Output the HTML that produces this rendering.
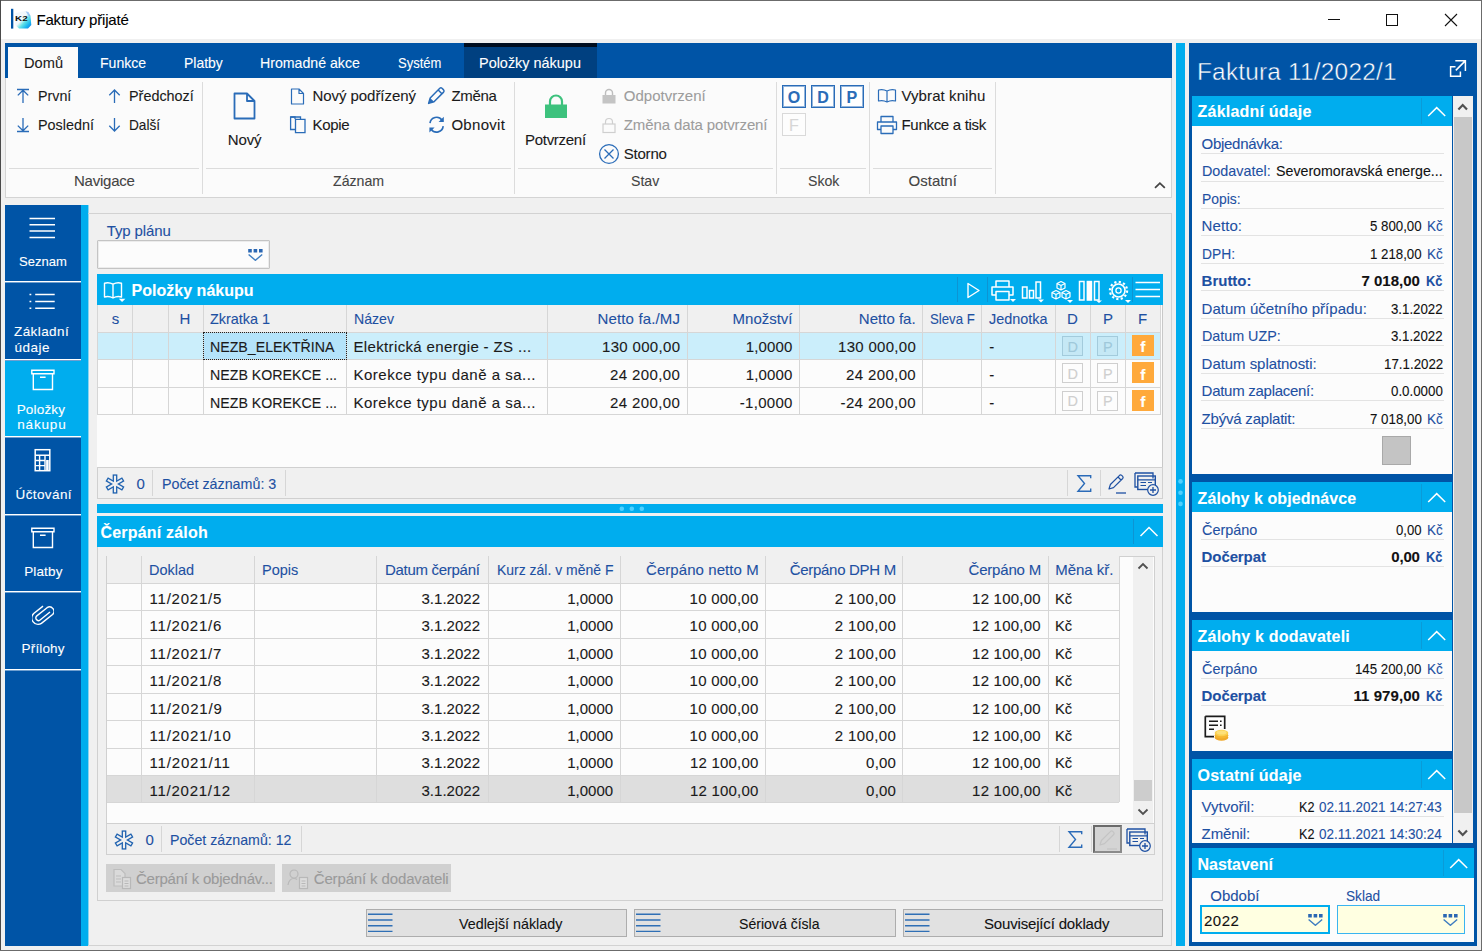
<!DOCTYPE html>
<html lang="cs"><head><meta charset="utf-8"><title>Faktury přijaté</title>
<style>
html,body{margin:0;padding:0;}
body{width:1482px;height:951px;overflow:hidden;background:#f0f0f0;font-family:"Liberation Sans",sans-serif;}
#w{position:relative;width:1482px;height:951px;overflow:hidden;}
#w div,#w span,#w svg{position:absolute;box-sizing:border-box;}
#w span{white-space:pre;-webkit-text-stroke:0.1px;}
</style></head><body><div id="w">
<div style="left:0px;top:0px;width:1482px;height:951px;background:#f0f0f0;"></div>
<div style="left:1px;top:1px;width:1480px;height:38px;background:#ffffff;"></div>
<div style="left:0px;top:0px;width:1482px;height:1px;background:#6b6b6b;"></div>
<div style="left:0px;top:0px;width:1px;height:951px;background:#4a4a4a;"></div>
<div style="left:1481px;top:0px;width:1px;height:951px;background:#6b6b6b;"></div>
<div style="left:0px;top:950px;width:1482px;height:1px;background:#6b6b6b;"></div>
<svg style="left:11px;top:8px;" width="22" height="22" viewBox="0 0 22 22"><defs><linearGradient id="k2g" x1="0" y1="0" x2="1" y2="1"><stop offset="0.45" stop-color="#f2f8fc"/><stop offset="0.62" stop-color="#5fe0e6"/><stop offset="0.8" stop-color="#18b4f0"/><stop offset="1" stop-color="#1b6fe0"/></linearGradient></defs>
<rect x="0" y="0.8" width="2.3" height="19.8" fill="#0054a6"/>
<path d="M4.5 5 L14 3 L19.5 8 L20.3 17 L17 20.6 L8 20.6 L4 17 Z" fill="url(#k2g)"/>
<path d="M14.5 3.2 L17.5 4 L19.6 8 L18 8.5 Z" fill="#7fb4f2" opacity="0.75"/>
<text x="4.1" y="12.9" font-size="7" font-weight="bold" font-family="Liberation Sans, sans-serif" fill="#111" textLength="12.6" lengthAdjust="spacingAndGlyphs">K2</text></svg>
<span style="top:11px;font-size:15px;line-height:17px;color:#000;letter-spacing:-0.200px;left:36.50px;">Faktury přijaté</span>
<div style="left:1328px;top:19px;width:12px;height:1px;background:#111;"></div>
<div style="left:1386px;top:14px;width:12px;height:12px;border:1px solid #111;"></div>
<svg style="left:1444px;top:13px;" width="14" height="14" viewBox="0 0 14 14"><path d="M1 1 L13 13 M13 1 L1 13" stroke="#111" stroke-width="1.1" fill="none"/></svg>
<div style="left:5px;top:43px;width:1167px;height:35px;background:#0054a6;"></div>
<div style="left:5px;top:78px;width:1167px;height:120px;background:#fbfbfb;border:1px solid #d4d4d4;border-top:none;"></div>
<div style="left:8px;top:47px;width:70px;height:31px;background:#fbfbfb;"></div>
<span style="top:54px;left:24.00px;font-size:15px;line-height:17px;color:#1a1a1a;transform:scaleX(0.9750);transform-origin:0 0;">Domů</span>
<span style="top:54px;left:99.60px;font-size:15px;line-height:17px;color:#fff;transform:scaleX(0.9381);transform-origin:0 0;">Funkce</span>
<span style="top:54px;left:184.00px;font-size:15px;line-height:17px;color:#fff;transform:scaleX(0.9293);transform-origin:0 0;">Platby</span>
<span style="top:54px;left:260.00px;font-size:15px;line-height:17px;color:#fff;transform:scaleX(0.9434);transform-origin:0 0;">Hromadné akce</span>
<span style="top:54px;left:397.50px;font-size:15px;line-height:17px;color:#fff;transform:scaleX(0.8660);transform-origin:0 0;">Systém</span>
<div style="left:464px;top:43px;width:133px;height:35px;background:#004080;"></div>
<div style="left:464px;top:43px;width:133px;height:4px;background:#000d1f;"></div>
<span style="top:54px;left:479.00px;font-size:15px;line-height:17px;color:#fff;transform:scaleX(0.9623);transform-origin:0 0;">Položky nákupu</span>
<svg style="left:16px;top:88px;" width="14" height="16" viewBox="0 0 14 16"><path d="M1 1.5 H13 M7 2.2 V15 M1.8 7.4 L7 2.2 L12.2 7.4" stroke="#2a6cb8" stroke-width="1.3" fill="none"/></svg>
<span style="top:87px;left:37.70px;font-size:15px;line-height:17px;color:#1a1a1a;transform:scaleX(0.9514);transform-origin:0 0;">První</span>
<svg style="left:16px;top:117px;" width="14" height="16" viewBox="0 0 14 16"><path d="M1 14.5 H13 M7 1 V13.8 M1.8 8.6 L7 13.8 L12.2 8.6" stroke="#2a6cb8" stroke-width="1.3" fill="none"/></svg>
<span style="top:116px;left:37.70px;font-size:15px;line-height:17px;color:#1a1a1a;transform:scaleX(0.9573);transform-origin:0 0;">Poslední</span>
<svg style="left:108px;top:88px;" width="13" height="16" viewBox="0 0 13 16"><path d="M6.5 2 V15 M1.3 7.2 L6.5 2 L11.7 7.2" stroke="#2a6cb8" stroke-width="1.3" fill="none"/></svg>
<span style="top:87px;left:129.00px;font-size:15px;line-height:17px;color:#1a1a1a;transform:scaleX(0.9594);transform-origin:0 0;">Předchozí</span>
<svg style="left:108px;top:117px;" width="13" height="16" viewBox="0 0 13 16"><path d="M6.5 1 V14 M1.3 8.8 L6.5 14 L11.7 8.8" stroke="#2a6cb8" stroke-width="1.3" fill="none"/></svg>
<span style="top:116px;left:129.00px;font-size:15px;line-height:17px;color:#1a1a1a;transform:scaleX(0.9109);transform-origin:0 0;">Další</span>
<div style="left:9px;top:168px;width:190px;height:1px;background:#dcdcdc;"></div>
<span style="top:172px;font-size:15px;line-height:17px;color:#444;letter-spacing:-0.243px;left:74.00px;">Navigace</span>
<div style="left:202px;top:82px;width:1px;height:112px;background:#dcdcdc;"></div>
<svg style="left:233px;top:92px;" width="23" height="28" viewBox="0 0 23 28"><path d="M1.5 1.5 H14 L21.5 9 V26.5 H1.5 Z M14 1.5 V9 H21.5" stroke="#2a6cb8" stroke-width="1.8" fill="none" stroke-linejoin="round"/></svg>
<span style="top:131px;font-size:15px;line-height:17px;color:#1a1a1a;letter-spacing:-0.083px;left:227.70px;">Nový</span>
<svg style="left:290px;top:88px;" width="15" height="17" viewBox="0 0 15 17"><path d="M1.5 1 H9 L13.5 5.5 V16 H1.5 Z M9 1 V5.5 H13.5" stroke="#2a6cb8" stroke-width="1.2" fill="none" stroke-linejoin="round"/></svg>
<span style="top:87px;font-size:15px;line-height:17px;color:#1a1a1a;letter-spacing:-0.058px;left:312.50px;">Nový podřízený</span>
<svg style="left:289px;top:115px;" width="18" height="19" viewBox="0 0 18 19"><path d="M6 4 V2 H1.6 V14.5 H6 M6.5 4.4 H16 V17.6 H6.5 Z" stroke="#2a6cb8" stroke-width="1.3" fill="none" stroke-linejoin="miter"/><path d="M1.6 2 H11.5 V4" stroke="#2a6cb8" stroke-width="1.3" fill="none"/></svg>
<span style="top:116px;font-size:15px;line-height:17px;color:#1a1a1a;letter-spacing:-0.287px;left:312.50px;">Kopie</span>
<svg style="left:427px;top:86px;" width="19" height="19" viewBox="0 0 19 19"><path d="M1.6 17.4 L3.2 12 L12.8 2.3 Q13.9 1.3 15 2.3 L16.6 3.9 Q17.6 5 16.6 6.1 L7 15.8 Z M11.2 4 L14.9 7.7" stroke="#2a6cb8" stroke-width="1.5" fill="none" stroke-linejoin="round"/><path d="M1.6 17.4 L3.2 12 L7 15.8 Z" fill="#2a6cb8"/></svg>
<span style="top:87px;font-size:15px;line-height:17px;color:#1a1a1a;letter-spacing:-0.287px;left:451.40px;">Změna</span>
<svg style="left:428px;top:115px;" width="18" height="19" viewBox="0 0 18 19"><path d="M2 8.2 A6.6 6.6 0 0 1 14 5.2 M15.2 11.2 A6.6 6.6 0 0 1 3.2 14.2" stroke="#2a6cb8" stroke-width="1.6" fill="none"/><path d="M15.8 1.8 V7 H10.6 Z M1.4 17.6 V12.4 H6.6 Z" fill="#2a6cb8"/></svg>
<span style="top:116px;font-size:15px;line-height:17px;color:#1a1a1a;letter-spacing:0.308px;left:451.40px;">Obnovit</span>
<div style="left:206px;top:168px;width:305px;height:1px;background:#dcdcdc;"></div>
<span style="top:172px;left:332.80px;font-size:15px;line-height:17px;color:#444;transform:scaleX(0.9438);transform-origin:0 0;">Záznam</span>
<div style="left:514px;top:82px;width:1px;height:112px;background:#dcdcdc;"></div>
<svg style="left:544px;top:93px;" width="24" height="26" viewBox="0 0 24 26"><path d="M6 12 V8.5 A6 6 0 0 1 18 8.5 V12" stroke="#3dc27d" stroke-width="2.2" fill="none"/><rect x="1" y="11.5" width="22" height="13.5" fill="#3dc27d"/></svg>
<span style="top:131px;font-size:15px;line-height:17px;color:#1a1a1a;letter-spacing:-0.287px;left:525.00px;">Potvrzení</span>
<svg style="left:601px;top:87px;" width="16" height="18" viewBox="0 0 16 18"><path d="M4.5 8 V6 A3.5 3.5 0 0 1 11.5 6 V8" stroke="#bdbdbd" stroke-width="1.4" fill="none"/><rect x="1.5" y="8" width="13" height="8.5" fill="#c4c4c4"/></svg>
<span style="top:87px;font-size:15px;line-height:17px;color:#9d9d9d;letter-spacing:0.015px;left:623.80px;">Odpotvrzení</span>
<svg style="left:601px;top:116px;" width="16" height="18" viewBox="0 0 16 18"><path d="M4.5 8 V6 A3.5 3.5 0 0 1 11.5 6 V8" stroke="#cfcfcf" stroke-width="1.2" fill="none"/><rect x="2" y="8" width="12" height="8.5" fill="none" stroke="#cfcfcf" stroke-width="1.2"/></svg>
<span style="top:116px;font-size:15px;line-height:17px;color:#9d9d9d;letter-spacing:-0.116px;left:623.80px;">Změna data potvrzení</span>
<svg style="left:598px;top:143px;" width="22" height="22" viewBox="0 0 22 22"><circle cx="11" cy="11" r="9.4" stroke="#2a6cb8" stroke-width="1.3" fill="none"/><path d="M6.5 6.5 L15.5 15.5 M15.5 6.5 L6.5 15.5" stroke="#2a6cb8" stroke-width="1.3"/></svg>
<span style="top:145px;font-size:15px;line-height:17px;color:#1a1a1a;letter-spacing:-0.230px;left:623.80px;">Storno</span>
<div style="left:518px;top:168px;width:255px;height:1px;background:#dcdcdc;"></div>
<span style="top:172px;left:631.00px;font-size:15px;line-height:17px;color:#444;transform:scaleX(0.9400);transform-origin:0 0;">Stav</span>
<div style="left:776px;top:82px;width:1px;height:112px;background:#dcdcdc;"></div>
<div style="left:782px;top:85px;width:24px;height:23px;background:#fff;border:1px solid #2a6cb8;box-shadow:inset 0 0 0 1px rgba(42,108,184,0.5);"></div>
<span style="top:89px;font-size:16px;line-height:17px;color:#2a6cb8;font-weight:bold;left:787.75px;">O</span>
<div style="left:811px;top:85px;width:24px;height:23px;background:#fff;border:1px solid #2a6cb8;box-shadow:inset 0 0 0 1px rgba(42,108,184,0.5);"></div>
<span style="top:89px;font-size:16px;line-height:17px;color:#2a6cb8;font-weight:bold;left:817.25px;">D</span>
<div style="left:840px;top:85px;width:24px;height:23px;background:#fff;border:1px solid #2a6cb8;box-shadow:inset 0 0 0 1px rgba(42,108,184,0.5);"></div>
<span style="top:89px;font-size:16px;line-height:17px;color:#2a6cb8;font-weight:bold;left:846.62px;">P</span>
<div style="left:782px;top:113px;width:24px;height:23px;background:#fdfdfd;border:1px solid #d9d9d9;"></div>
<span style="top:117px;font-size:16px;line-height:17px;color:#d6d6d6;left:789.12px;">F</span>
<div style="left:780px;top:168px;width:86px;height:1px;background:#dcdcdc;"></div>
<span style="top:172px;left:807.50px;font-size:15px;line-height:17px;color:#444;transform:scaleX(0.9373);transform-origin:0 0;">Skok</span>
<div style="left:869px;top:82px;width:1px;height:112px;background:#dcdcdc;"></div>
<svg style="left:877px;top:88px;" width="20" height="16" viewBox="0 0 20 16"><path d="M10 3 Q6 0.8 1.5 2 V13 Q6 11.8 10 14 Q14 11.8 18.5 13 V2 Q14 0.8 10 3 Z M10 3 V14" stroke="#2a6cb8" stroke-width="1.2" fill="none" stroke-linejoin="round"/></svg>
<span style="top:87px;font-size:15px;line-height:17px;color:#1a1a1a;letter-spacing:0.086px;left:901.50px;">Vybrat knihu</span>
<svg style="left:876px;top:115px;" width="22" height="20" viewBox="0 0 22 20"><path d="M5 7 V1.5 H17 V7 M5 14.5 H1.5 V7 H20.5 V14.5 H17 M5 11 H17 V18.5 H5 Z" stroke="#2a6cb8" stroke-width="1.3" fill="none" stroke-linejoin="round"/></svg>
<span style="top:116px;font-size:15px;line-height:17px;color:#1a1a1a;letter-spacing:-0.296px;left:901.50px;">Funkce a tisk</span>
<div style="left:873px;top:168px;width:119px;height:1px;background:#dcdcdc;"></div>
<span style="top:172px;font-size:15px;line-height:17px;color:#444;letter-spacing:-0.017px;left:908.60px;">Ostatní</span>
<div style="left:995px;top:82px;width:1px;height:112px;background:#dcdcdc;"></div>
<svg style="left:1153px;top:181px;" width="14" height="9" viewBox="0 0 14 9"><path d="M2 6.8 L6.9 2.2 L11.8 6.8" stroke="#444" stroke-width="1.8" fill="none"/></svg>
<div style="left:5px;top:205px;width:76px;height:741px;background:#0054a6;"></div>
<div style="left:81px;top:205px;width:7px;height:741px;background:#00adee;"></div>
<div style="left:88px;top:205px;width:1px;height:741px;background:#8ad4f0;"></div>
<div style="left:5px;top:360px;width:76px;height:77px;background:#00adee;"></div>
<div style="left:5px;top:281px;width:76px;height:1px;background:#ffffff;"></div>
<div style="left:5px;top:282px;width:76px;height:1px;background:#6f9fcf;"></div>
<div style="left:5px;top:359px;width:76px;height:1px;background:#ffffff;"></div>
<div style="left:5px;top:360px;width:76px;height:1px;background:#6f9fcf;"></div>
<div style="left:5px;top:436px;width:76px;height:1px;background:#ffffff;"></div>
<div style="left:5px;top:437px;width:76px;height:1px;background:#6f9fcf;"></div>
<div style="left:5px;top:514px;width:76px;height:1px;background:#ffffff;"></div>
<div style="left:5px;top:515px;width:76px;height:1px;background:#6f9fcf;"></div>
<div style="left:5px;top:591px;width:76px;height:1px;background:#ffffff;"></div>
<div style="left:5px;top:592px;width:76px;height:1px;background:#6f9fcf;"></div>
<div style="left:5px;top:669px;width:76px;height:1px;background:#ffffff;"></div>
<div style="left:5px;top:670px;width:76px;height:1px;background:#6f9fcf;"></div>
<svg style="left:29px;top:217px;" width="27" height="22" viewBox="0 0 27 22"><path d="M0.5 1.5 H26 M0.5 7.8 H26 M0.5 14.1 H26 M0.5 20.4 H26" stroke="#fff" stroke-width="1.5"/></svg>
<span style="top:254px;left:19.00px;font-size:13.5px;line-height:15px;color:#ffffff;transform:scaleX(0.9657);transform-origin:0 0;">Seznam</span>
<svg style="left:29px;top:293px;" width="27" height="20" viewBox="0 0 27 20"><path d="M6.2 1.5 H25.7 M6.2 8.4 H25.7 M6.2 15.3 H25.7" stroke="#fff" stroke-width="1.5"/><path d="M0.5 1.5 H2.3 M0.5 8.4 H2.3 M0.5 15.3 H2.3" stroke="#fff" stroke-width="1.5"/></svg>
<span style="top:324px;font-size:13.5px;line-height:15px;color:#ffffff;letter-spacing:0.407px;left:14.00px;">Základní</span>
<span style="top:340px;font-size:13.5px;line-height:15px;color:#ffffff;letter-spacing:0.475px;left:14.50px;">údaje</span>
<svg style="left:31px;top:369px;" width="24" height="22" viewBox="0 0 24 22"><path d="M0.8 1.2 H23 V4.8 H0.8 Z M2.3 4.8 V20.5 H21.5 V4.8 M9 8.2 H14.6" stroke="#fff" stroke-width="1.4" fill="none"/></svg>
<span style="top:402px;font-size:13.5px;line-height:15px;color:#ffffff;letter-spacing:0.175px;left:16.70px;">Položky</span>
<span style="top:417px;font-size:13.5px;line-height:15px;color:#ffffff;letter-spacing:0.850px;left:17.20px;">nákupu</span>
<svg style="left:34px;top:448px;" width="17" height="24" viewBox="0 0 17 24"><rect x="1.2" y="1.7" width="14.6" height="21" stroke="#fff" stroke-width="1.5" fill="none"/><path d="M1.2 7.2 H15.8 M1.2 12.5 H11 M1.2 17.6 H11 M5.6 7.2 V22.7 M11 7.2 V22.7" stroke="#fff" stroke-width="1.4"/><path d="M13.4 12 V22" stroke="#fff" stroke-width="2.6"/></svg>
<span style="top:487px;font-size:13.5px;line-height:15px;color:#ffffff;letter-spacing:0.379px;left:15.60px;">Účtování</span>
<svg style="left:31px;top:527px;" width="24" height="22" viewBox="0 0 24 22"><path d="M0.8 1.2 H23 V4.8 H0.8 Z M2.3 4.8 V20.5 H21.5 V4.8 M9 8.2 H14.6" stroke="#fff" stroke-width="1.4" fill="none"/></svg>
<span style="top:564px;font-size:13.5px;line-height:15px;color:#ffffff;letter-spacing:0.140px;left:24.20px;">Platby</span>
<svg style="left:32px;top:603px;" width="22" height="24" viewBox="0 0 22 24"><path d="M17.5 8 L8.8 17.3 A2.6 2.6 0 0 1 5 13.7 L14 4.2 A4.4 4.4 0 0 1 20.4 10.2 L10.6 20.5 A6.3 6.3 0 0 1 1.6 11.8 L9.8 3.2" stroke="#fff" stroke-width="1.4" fill="none" transform="rotate(8 11 12)"/></svg>
<span style="top:641px;font-size:13.5px;line-height:15px;color:#ffffff;letter-spacing:0.150px;left:21.60px;">Přílohy</span>
<div style="left:88px;top:213px;width:1084px;height:733px;border:1px solid #d2d2d2;border-left:none;"></div>
<span style="top:222px;font-size:15px;line-height:17px;color:#1e50a2;letter-spacing:-0.125px;left:106.70px;">Typ plánu</span>
<div style="left:97px;top:240px;width:173px;height:29px;background:#fcfcfc;border:1px solid #c4c4c4;box-shadow:inset 0 0 0 1px #ececec;border-radius:1px;"></div>
<svg style="left:248px;top:248px;" width="15" height="13" viewBox="0 0 15 13"><path d="M0.2 1 H3.8 V4.6 H0.2 Z M5.6 1 H9.2 V4.6 H5.6 Z M11 1 H14.6 V4.6 H11 Z" fill="#2a67b3"/><path d="M0.6 6.5 L7.4 12.3 L14.2 6.5" stroke="#3f7dc0" stroke-width="1.4" fill="none"/></svg>
<div style="left:97px;top:274px;width:1066px;height:31px;background:#00adee;"></div>
<svg style="left:103px;top:280px;" width="24" height="23" viewBox="0 0 24 23"><path d="M10 4.2 Q6 2 1.5 3.2 V17 Q6 15.8 10 18 Q14 15.8 18.5 17 V3.2 Q14 2 10 4.2 Z M10 4.2 V18" stroke="#fff" stroke-width="1.4" fill="none" stroke-linejoin="round"/><path d="M15.8 18.8 H22.4 L19.1 22 Z" fill="#fff"/></svg>
<span style="top:282px;font-size:16px;line-height:17px;color:#ffffff;font-weight:bold;letter-spacing:0.012px;left:131.60px;">Položky nákupu</span>
<div style="left:957px;top:277px;width:1px;height:25px;background:#0d94d3;"></div>
<div style="left:987px;top:277px;width:1px;height:25px;background:#0d94d3;"></div>
<div style="left:1132px;top:277px;width:1px;height:25px;background:#0d94d3;"></div>
<svg style="left:966px;top:282px;" width="15" height="17" viewBox="0 0 15 17"><path d="M2 1.5 L13 8.5 L2 15.5 Z" stroke="#fff" stroke-width="1.4" fill="none" stroke-linejoin="round"/></svg>
<svg style="left:990px;top:279px;" width="26" height="24" viewBox="0 0 26 24"><path d="M6 8 V2 H19 V8 M6 16 H2 V8 H23 V16 H19 M6 12.5 H19 V21 H6 Z" stroke="#fff" stroke-width="1.5" fill="none" stroke-linejoin="round"/><path d="M20 20 H26 L23 23 Z" fill="#fff"/></svg>
<svg style="left:1021px;top:280px;" width="23" height="23" viewBox="0 0 23 23"><path d="M1.5 7 H6 V18 H1.5 Z M8.5 10.5 H12.5 V18 H8.5 Z M15 2 H19.5 V18 H15 Z" stroke="#fff" stroke-width="1.5" fill="none"/><path d="M17 19.5 H23 L20 22.5 Z" fill="#fff"/></svg>
<svg style="left:1050px;top:280px;" width="23" height="23" viewBox="0 0 23 23"><path d="M11 1.5 L15 3.5 V8 L11 10 L7 8 V3.5 Z M7 3.5 L11 5.5 L15 3.5 M11 5.5 V10 M6 10.5 L10 12.5 V17 L6 19 L2 17 V12.5 Z M2 12.5 L6 14.5 L10 12.5 M6 14.5 V19 M16 10.5 L20 12.5 V17 L16 19 L12 17 V12.5 Z M12 12.5 L16 14.5 L20 12.5 M16 14.5 V19" stroke="#fff" stroke-width="1.2" fill="none" stroke-linejoin="round"/><path d="M17 20 H23 L20 23 Z" fill="#fff"/></svg>
<svg style="left:1078px;top:280px;" width="24" height="23" viewBox="0 0 24 23"><path d="M1.5 1.5 H6 V20 H1.5 Z M16.5 1.5 H21 V20 H16.5 Z" stroke="#fff" stroke-width="1.5" fill="none"/><rect x="8.6" y="0.8" width="5.6" height="20" fill="#fff"/><path d="M18 20.5 H24 L21 23 Z" fill="#fff"/></svg>
<svg style="left:1108px;top:280px;" width="23" height="23" viewBox="0 0 23 23"><circle cx="10.5" cy="10.5" r="6.5" stroke="#fff" stroke-width="1.6" fill="none"/><circle cx="10.5" cy="10.5" r="2.6" stroke="#fff" stroke-width="1.3" fill="none"/><circle cx="10.5" cy="10.5" r="8.6" stroke="#fff" stroke-width="2.2" fill="none" stroke-dasharray="2.2 2.3"/><path d="M17 20 H23 L20 23 Z" fill="#fff"/></svg>
<svg style="left:1135px;top:281px;" width="26" height="18" viewBox="0 0 26 18"><path d="M0.5 1.5 H25 M0.5 8.5 H25 M0.5 15.5 H25" stroke="#fff" stroke-width="1.5"/></svg>
<div style="left:97px;top:305px;width:1066px;height:162px;background:#fcfcfc;"></div>
<div style="left:97px;top:305px;width:1064px;height:27px;background:#f0f0f0;"></div>
<div style="left:1162px;top:305px;width:1px;height:194px;background:#c8c8c8;"></div>
<div style="left:97px;top:332px;width:1064px;height:27px;background:#cbeefb;"></div>
<div style="left:203px;top:332px;width:143px;height:27px;background:#b4e3fa;"></div>
<div style="left:97px;top:332px;width:1064px;height:1px;background:#d6d6d6;"></div>
<div style="left:97px;top:359px;width:1064px;height:1px;background:#d6d6d6;"></div>
<div style="left:97px;top:387px;width:1064px;height:1px;background:#d6d6d6;"></div>
<div style="left:97px;top:414px;width:1064px;height:1px;background:#d6d6d6;"></div>
<div style="left:97px;top:305px;width:1px;height:110px;background:#d6d6d6;"></div>
<div style="left:132px;top:305px;width:1px;height:110px;background:#d6d6d6;"></div>
<div style="left:168px;top:305px;width:1px;height:110px;background:#d6d6d6;"></div>
<div style="left:203px;top:305px;width:1px;height:110px;background:#d6d6d6;"></div>
<div style="left:346px;top:305px;width:1px;height:110px;background:#d6d6d6;"></div>
<div style="left:547px;top:305px;width:1px;height:110px;background:#d6d6d6;"></div>
<div style="left:687px;top:305px;width:1px;height:110px;background:#d6d6d6;"></div>
<div style="left:799px;top:305px;width:1px;height:110px;background:#d6d6d6;"></div>
<div style="left:922px;top:305px;width:1px;height:110px;background:#d6d6d6;"></div>
<div style="left:981px;top:305px;width:1px;height:110px;background:#d6d6d6;"></div>
<div style="left:1055px;top:305px;width:1px;height:110px;background:#d6d6d6;"></div>
<div style="left:1090px;top:305px;width:1px;height:110px;background:#d6d6d6;"></div>
<div style="left:1125px;top:305px;width:1px;height:110px;background:#d6d6d6;"></div>
<div style="left:1160px;top:305px;width:1px;height:110px;background:#d6d6d6;"></div>
<span style="top:310px;font-size:15px;line-height:17px;color:#1e50a2;left:111.75px;">s</span>
<span style="top:310px;font-size:15px;line-height:17px;color:#1e50a2;left:179.62px;">H</span>
<span style="top:310px;left:209.90px;font-size:15px;line-height:17px;color:#1e50a2;transform:scaleX(0.9616);transform-origin:0 0;">Zkratka 1</span>
<span style="top:310px;left:353.50px;font-size:15px;line-height:17px;color:#1e50a2;transform:scaleX(0.9412);transform-origin:0 0;">Název</span>
<span style="top:310px;font-size:15px;line-height:17px;color:#1e50a2;letter-spacing:0.150px;left:597.50px;">Netto fa./MJ</span>
<span style="top:310px;font-size:15px;line-height:17px;color:#1e50a2;letter-spacing:-0.014px;left:732.60px;">Množství</span>
<span style="top:310px;font-size:15px;line-height:17px;color:#1e50a2;letter-spacing:0.019px;left:858.80px;">Netto fa.</span>
<span style="top:310px;left:930.00px;font-size:15px;line-height:17px;color:#1e50a2;transform:scaleX(0.8808);transform-origin:0 0;">Sleva F</span>
<span style="top:310px;left:988.50px;font-size:15px;line-height:17px;color:#1e50a2;transform:scaleX(0.9623);transform-origin:0 0;">Jednotka</span>
<span style="top:310px;font-size:15px;line-height:17px;color:#1e50a2;left:1067.12px;">D</span>
<span style="top:310px;font-size:15px;line-height:17px;color:#1e50a2;left:1103.00px;">P</span>
<span style="top:310px;font-size:15px;line-height:17px;color:#1e50a2;left:1137.88px;">F</span>
<span style="top:338px;left:209.90px;font-size:15px;line-height:17px;color:#1a1a1a;transform:scaleX(0.9450);transform-origin:0 0;">NEZB_ELEKTŘINA</span>
<span style="top:338px;font-size:15px;line-height:17px;color:#1a1a1a;letter-spacing:0.354px;left:353.50px;">Elektrická energie - ZS ...</span>
<span style="top:338px;font-size:15px;line-height:17px;color:#1a1a1a;letter-spacing:0.322px;left:602.00px;">130 000,00</span>
<span style="top:338px;font-size:15px;line-height:17px;color:#1a1a1a;letter-spacing:0.140px;left:745.80px;">1,0000</span>
<span style="top:338px;font-size:15px;line-height:17px;color:#1a1a1a;letter-spacing:0.300px;left:838.00px;">130 000,00</span>
<span style="top:338px;font-size:15px;line-height:17px;color:#1a1a1a;left:989.20px;">-</span>
<div style="left:1062px;top:336px;width:21px;height:20px;background:#c5e8f5;border:1px solid #a3cbdc;"></div>
<span style="top:339px;font-size:14.5px;line-height:16px;color:#9fc8da;left:1067.55px;">D</span>
<div style="left:1097px;top:336px;width:21px;height:20px;background:#c5e8f5;border:1px solid #a3cbdc;"></div>
<span style="top:339px;font-size:14.5px;line-height:16px;color:#9fc8da;left:1102.92px;">P</span>
<div style="left:1132px;top:335px;width:22px;height:21px;background:#ffa93b;"></div>
<span style="top:338px;font-size:15.5px;line-height:17px;color:#fff;font-weight:bold;left:1140.17px;">f</span>
<span style="top:366px;left:209.90px;font-size:15px;line-height:17px;color:#1a1a1a;transform:scaleX(0.9467);transform-origin:0 0;">NEZB KOREKCE ...</span>
<span style="top:366px;font-size:15px;line-height:17px;color:#1a1a1a;letter-spacing:0.494px;left:353.50px;">Korekce typu daně a sa...</span>
<span style="top:366px;font-size:15px;line-height:17px;color:#1a1a1a;letter-spacing:0.394px;left:610.00px;">24 200,00</span>
<span style="top:366px;font-size:15px;line-height:17px;color:#1a1a1a;letter-spacing:0.140px;left:745.80px;">1,0000</span>
<span style="top:366px;font-size:15px;line-height:17px;color:#1a1a1a;letter-spacing:0.369px;left:846.00px;">24 200,00</span>
<span style="top:366px;font-size:15px;line-height:17px;color:#1a1a1a;left:989.20px;">-</span>
<div style="left:1062px;top:363px;width:21px;height:20px;background:#fdfdfd;border:1px solid #cfcfcf;"></div>
<span style="top:366px;font-size:14.5px;line-height:16px;color:#cfcfcf;left:1067.55px;">D</span>
<div style="left:1097px;top:363px;width:21px;height:20px;background:#fdfdfd;border:1px solid #cfcfcf;"></div>
<span style="top:366px;font-size:14.5px;line-height:16px;color:#cfcfcf;left:1102.92px;">P</span>
<div style="left:1132px;top:362px;width:22px;height:21px;background:#ffa93b;"></div>
<span style="top:366px;font-size:15.5px;line-height:17px;color:#fff;font-weight:bold;left:1140.17px;">f</span>
<span style="top:394px;left:209.90px;font-size:15px;line-height:17px;color:#1a1a1a;transform:scaleX(0.9467);transform-origin:0 0;">NEZB KOREKCE ...</span>
<span style="top:394px;font-size:15px;line-height:17px;color:#1a1a1a;letter-spacing:0.494px;left:353.50px;">Korekce typu daně a sa...</span>
<span style="top:394px;font-size:15px;line-height:17px;color:#1a1a1a;letter-spacing:0.394px;left:610.00px;">24 200,00</span>
<span style="top:394px;font-size:15px;line-height:17px;color:#1a1a1a;letter-spacing:0.283px;left:739.80px;">-1,0000</span>
<span style="top:394px;font-size:15px;line-height:17px;color:#1a1a1a;letter-spacing:0.383px;left:840.50px;">-24 200,00</span>
<span style="top:394px;font-size:15px;line-height:17px;color:#1a1a1a;left:989.20px;">-</span>
<div style="left:1062px;top:391px;width:21px;height:20px;background:#fdfdfd;border:1px solid #cfcfcf;"></div>
<span style="top:393px;font-size:14.5px;line-height:16px;color:#cfcfcf;left:1067.55px;">D</span>
<div style="left:1097px;top:391px;width:21px;height:20px;background:#fdfdfd;border:1px solid #cfcfcf;"></div>
<span style="top:393px;font-size:14.5px;line-height:16px;color:#cfcfcf;left:1102.92px;">P</span>
<div style="left:1132px;top:390px;width:22px;height:21px;background:#ffa93b;"></div>
<span style="top:393px;font-size:15.5px;line-height:17px;color:#fff;font-weight:bold;left:1140.17px;">f</span>
<div style="left:203px;top:332px;width:144px;height:28px;border:1px dotted #222;"></div>
<div style="left:97px;top:467px;width:1066px;height:32px;background:#f0f0f0;border:1px solid #d0d0d0;"></div>
<svg style="left:105.4px;top:473.5px;" width="20" height="20" viewBox="0 0 20 20"><g transform="translate(10 10)"><path d="M0 -9.6 V9.6" transform="rotate(0)" stroke="#1f62b0" stroke-width="4.7"/><path d="M0 -9.6 V9.6" transform="rotate(60)" stroke="#1f62b0" stroke-width="4.7"/><path d="M0 -9.6 V9.6" transform="rotate(120)" stroke="#1f62b0" stroke-width="4.7"/><path d="M0 -8.3 V8.3" transform="rotate(0)" stroke="#f0f0f0" stroke-width="2.1"/><path d="M0 -8.3 V8.3" transform="rotate(60)" stroke="#f0f0f0" stroke-width="2.1"/><path d="M0 -8.3 V8.3" transform="rotate(120)" stroke="#f0f0f0" stroke-width="2.1"/></g></svg>
<span style="top:475px;font-size:15px;line-height:17px;color:#1e50a2;left:136.40px;">0</span>
<div style="left:152px;top:470px;width:1px;height:26px;background:#d6d6d6;"></div>
<span style="top:475px;left:161.60px;font-size:15px;line-height:17px;color:#1e50a2;transform:scaleX(0.9517);transform-origin:0 0;">Počet záznamů: 3</span>
<div style="left:285px;top:470px;width:1px;height:26px;background:#d6d6d6;"></div>
<div style="left:1067px;top:470px;width:1px;height:26px;background:#d6d6d6;"></div>
<div style="left:1100px;top:470px;width:1px;height:26px;background:#d6d6d6;"></div>
<svg style="left:1075.5px;top:474px;" width="17" height="20" viewBox="0 0 17 20"><path d="M14.7 4.3 V1.7 H2 L8.5 9.5 L2 17.2 H14.7 V14.6" stroke="#2b6bb8" stroke-width="1.4" fill="none" stroke-linejoin="miter"/></svg>
<svg style="left:1107px;top:473px;" width="20" height="22" viewBox="0 0 20 22"><path d="M2 16 L3.4 11.5 L12.6 2.3 Q13.6 1.4 14.7 2.4 L15.7 3.4 Q16.6 4.5 15.7 5.5 L6.5 14.7 Z M11 4 L14 7" stroke="#1e50a2" stroke-width="1.2" fill="none" stroke-linejoin="round"/><path d="M9 20 H19" stroke="#1e50a2" stroke-width="1.3"/></svg>
<svg style="left:1134px;top:472px;" width="25" height="24" viewBox="0 0 25 24"><g stroke="#1e50a2" fill="none"><path d="M1 1 H19 V6.5" stroke-width="1.3"/><path d="M1 1 V15 H3.5" stroke-width="1.3"/><rect x="3.8" y="4" width="17.5" height="13.5" stroke-width="1.4"/><path d="M3.8 7.8 H21.3 M6.5 10.5 H12 M6.5 13.5 H12 M14 10.5 H18 " stroke-width="1.2"/></g><circle cx="19" cy="18" r="5.3" fill="#f0f0f0" stroke="#1e50a2" stroke-width="1.2"/><path d="M16 18 H22 M19 15 V21" stroke="#1e50a2" stroke-width="1.3"/></svg>
<div style="left:97px;top:504px;width:1066px;height:9px;background:#00adee;"></div>
<svg style="left:618px;top:505px;" width="8" height="8" viewBox="0 0 8 8"><circle cx="3.8" cy="3.8" r="2.3" fill="#4fd0ff"/></svg>
<svg style="left:628px;top:505px;" width="8" height="8" viewBox="0 0 8 8"><circle cx="3.8" cy="3.8" r="2.3" fill="#4fd0ff"/></svg>
<svg style="left:638px;top:505px;" width="8" height="8" viewBox="0 0 8 8"><circle cx="3.8" cy="3.8" r="2.3" fill="#4fd0ff"/></svg>
<div style="left:97px;top:516px;width:1066px;height:31px;background:#00adee;"></div>
<span style="top:524px;font-size:16px;line-height:17px;color:#ffffff;font-weight:bold;letter-spacing:0.200px;left:100.40px;">Čerpání záloh</span>
<div style="left:1133px;top:519px;width:1px;height:25px;background:#0d94d3;"></div>
<svg style="left:1139px;top:526px;" width="20" height="12" viewBox="0 0 20 12"><path d="M1.5 10 L10 1.5 L18.5 10" stroke="#fff" stroke-width="1.5" fill="none"/></svg>
<div style="left:97px;top:547px;width:1066px;height:354px;border:1px solid #d0d0d0;border-top:none;"></div>
<div style="left:106px;top:556px;width:1049px;height:268px;background:#fcfcfc;border:1px solid #d0d0d0;"></div>
<div style="left:107px;top:556px;width:1012px;height:27px;background:#f0f0f0;"></div>
<div style="left:107px;top:775px;width:1012px;height:28px;background:#dedede;"></div>
<div style="left:107px;top:583px;width:1012px;height:1px;background:#d6d6d6;"></div>
<div style="left:107px;top:610px;width:1012px;height:1px;background:#d6d6d6;"></div>
<div style="left:107px;top:638px;width:1012px;height:1px;background:#d6d6d6;"></div>
<div style="left:107px;top:665px;width:1012px;height:1px;background:#d6d6d6;"></div>
<div style="left:107px;top:693px;width:1012px;height:1px;background:#d6d6d6;"></div>
<div style="left:107px;top:720px;width:1012px;height:1px;background:#d6d6d6;"></div>
<div style="left:107px;top:748px;width:1012px;height:1px;background:#d6d6d6;"></div>
<div style="left:107px;top:775px;width:1012px;height:1px;background:#d6d6d6;"></div>
<div style="left:107px;top:802px;width:1012px;height:1px;background:#d6d6d6;"></div>
<div style="left:141px;top:556px;width:1px;height:246px;background:#d6d6d6;"></div>
<div style="left:254px;top:556px;width:1px;height:246px;background:#d6d6d6;"></div>
<div style="left:376px;top:556px;width:1px;height:246px;background:#d6d6d6;"></div>
<div style="left:488px;top:556px;width:1px;height:246px;background:#d6d6d6;"></div>
<div style="left:620px;top:556px;width:1px;height:246px;background:#d6d6d6;"></div>
<div style="left:765px;top:556px;width:1px;height:246px;background:#d6d6d6;"></div>
<div style="left:902px;top:556px;width:1px;height:246px;background:#d6d6d6;"></div>
<div style="left:1048px;top:556px;width:1px;height:246px;background:#d6d6d6;"></div>
<div style="left:1119px;top:556px;width:1px;height:246px;background:#d6d6d6;"></div>
<span style="top:561px;left:149.30px;font-size:15px;line-height:17px;color:#1e50a2;transform:scaleX(0.9668);transform-origin:0 0;">Doklad</span>
<span style="top:561px;left:261.60px;font-size:15px;line-height:17px;color:#1e50a2;transform:scaleX(0.9680);transform-origin:0 0;">Popis</span>
<span style="top:561px;font-size:15px;line-height:17px;color:#1e50a2;letter-spacing:-0.292px;left:385.00px;">Datum čerpání</span>
<span style="top:561px;left:496.80px;font-size:15px;line-height:17px;color:#1e50a2;transform:scaleX(0.9312);transform-origin:0 0;">Kurz zál. v měně F</span>
<span style="top:561px;font-size:15px;line-height:17px;color:#1e50a2;letter-spacing:0.068px;left:646.00px;">Čerpáno netto M</span>
<span style="top:561px;font-size:15px;line-height:17px;color:#1e50a2;letter-spacing:-0.292px;left:789.70px;">Čerpáno DPH M</span>
<span style="top:561px;font-size:15px;line-height:17px;color:#1e50a2;letter-spacing:-0.194px;left:968.50px;">Čerpáno M</span>
<span style="top:561px;font-size:15px;line-height:17px;color:#1e50a2;letter-spacing:-0.050px;left:1055.30px;">Měna kř.</span>
<span style="top:590px;font-size:15px;line-height:17px;color:#1a1a1a;letter-spacing:0.781px;left:149.50px;">11/2021/5</span>
<span style="top:590px;font-size:15px;line-height:17px;color:#1a1a1a;letter-spacing:0.014px;left:421.50px;">3.1.2022</span>
<span style="top:590px;font-size:15px;line-height:17px;color:#1a1a1a;letter-spacing:-0.020px;left:567.30px;">1,0000</span>
<span style="top:590px;font-size:15px;line-height:17px;color:#1a1a1a;letter-spacing:0.244px;left:689.60px;">10 000,00</span>
<span style="top:590px;font-size:15px;line-height:17px;color:#1a1a1a;letter-spacing:0.386px;left:834.80px;">2 100,00</span>
<span style="top:590px;font-size:15px;line-height:17px;color:#1a1a1a;letter-spacing:0.219px;left:972.10px;">12 100,00</span>
<span style="top:590px;left:1055.40px;font-size:15px;line-height:17px;color:#1a1a1a;transform:scaleX(0.9829);transform-origin:0 0;">Kč</span>
<span style="top:617px;font-size:15px;line-height:17px;color:#1a1a1a;letter-spacing:0.781px;left:149.50px;">11/2021/6</span>
<span style="top:617px;font-size:15px;line-height:17px;color:#1a1a1a;letter-spacing:0.014px;left:421.50px;">3.1.2022</span>
<span style="top:617px;font-size:15px;line-height:17px;color:#1a1a1a;letter-spacing:-0.020px;left:567.30px;">1,0000</span>
<span style="top:617px;font-size:15px;line-height:17px;color:#1a1a1a;letter-spacing:0.244px;left:689.60px;">10 000,00</span>
<span style="top:617px;font-size:15px;line-height:17px;color:#1a1a1a;letter-spacing:0.386px;left:834.80px;">2 100,00</span>
<span style="top:617px;font-size:15px;line-height:17px;color:#1a1a1a;letter-spacing:0.219px;left:972.10px;">12 100,00</span>
<span style="top:617px;left:1055.40px;font-size:15px;line-height:17px;color:#1a1a1a;transform:scaleX(0.9829);transform-origin:0 0;">Kč</span>
<span style="top:645px;font-size:15px;line-height:17px;color:#1a1a1a;letter-spacing:0.781px;left:149.50px;">11/2021/7</span>
<span style="top:645px;font-size:15px;line-height:17px;color:#1a1a1a;letter-spacing:0.014px;left:421.50px;">3.1.2022</span>
<span style="top:645px;font-size:15px;line-height:17px;color:#1a1a1a;letter-spacing:-0.020px;left:567.30px;">1,0000</span>
<span style="top:645px;font-size:15px;line-height:17px;color:#1a1a1a;letter-spacing:0.244px;left:689.60px;">10 000,00</span>
<span style="top:645px;font-size:15px;line-height:17px;color:#1a1a1a;letter-spacing:0.386px;left:834.80px;">2 100,00</span>
<span style="top:645px;font-size:15px;line-height:17px;color:#1a1a1a;letter-spacing:0.219px;left:972.10px;">12 100,00</span>
<span style="top:645px;left:1055.40px;font-size:15px;line-height:17px;color:#1a1a1a;transform:scaleX(0.9829);transform-origin:0 0;">Kč</span>
<span style="top:672px;font-size:15px;line-height:17px;color:#1a1a1a;letter-spacing:0.781px;left:149.50px;">11/2021/8</span>
<span style="top:672px;font-size:15px;line-height:17px;color:#1a1a1a;letter-spacing:0.014px;left:421.50px;">3.1.2022</span>
<span style="top:672px;font-size:15px;line-height:17px;color:#1a1a1a;letter-spacing:-0.020px;left:567.30px;">1,0000</span>
<span style="top:672px;font-size:15px;line-height:17px;color:#1a1a1a;letter-spacing:0.244px;left:689.60px;">10 000,00</span>
<span style="top:672px;font-size:15px;line-height:17px;color:#1a1a1a;letter-spacing:0.386px;left:834.80px;">2 100,00</span>
<span style="top:672px;font-size:15px;line-height:17px;color:#1a1a1a;letter-spacing:0.219px;left:972.10px;">12 100,00</span>
<span style="top:672px;left:1055.40px;font-size:15px;line-height:17px;color:#1a1a1a;transform:scaleX(0.9829);transform-origin:0 0;">Kč</span>
<span style="top:700px;font-size:15px;line-height:17px;color:#1a1a1a;letter-spacing:0.844px;left:149.50px;">11/2021/9</span>
<span style="top:700px;font-size:15px;line-height:17px;color:#1a1a1a;letter-spacing:0.014px;left:421.50px;">3.1.2022</span>
<span style="top:700px;font-size:15px;line-height:17px;color:#1a1a1a;letter-spacing:-0.020px;left:567.30px;">1,0000</span>
<span style="top:700px;font-size:15px;line-height:17px;color:#1a1a1a;letter-spacing:0.244px;left:689.60px;">10 000,00</span>
<span style="top:700px;font-size:15px;line-height:17px;color:#1a1a1a;letter-spacing:0.386px;left:834.80px;">2 100,00</span>
<span style="top:700px;font-size:15px;line-height:17px;color:#1a1a1a;letter-spacing:0.219px;left:972.10px;">12 100,00</span>
<span style="top:700px;left:1055.40px;font-size:15px;line-height:17px;color:#1a1a1a;transform:scaleX(0.9829);transform-origin:0 0;">Kč</span>
<span style="top:727px;font-size:15px;line-height:17px;color:#1a1a1a;letter-spacing:0.811px;left:149.50px;">11/2021/10</span>
<span style="top:727px;font-size:15px;line-height:17px;color:#1a1a1a;letter-spacing:0.014px;left:421.50px;">3.1.2022</span>
<span style="top:727px;font-size:15px;line-height:17px;color:#1a1a1a;letter-spacing:-0.020px;left:567.30px;">1,0000</span>
<span style="top:727px;font-size:15px;line-height:17px;color:#1a1a1a;letter-spacing:0.244px;left:689.60px;">10 000,00</span>
<span style="top:727px;font-size:15px;line-height:17px;color:#1a1a1a;letter-spacing:0.386px;left:834.80px;">2 100,00</span>
<span style="top:727px;font-size:15px;line-height:17px;color:#1a1a1a;letter-spacing:0.219px;left:972.10px;">12 100,00</span>
<span style="top:727px;left:1055.40px;font-size:15px;line-height:17px;color:#1a1a1a;transform:scaleX(0.9829);transform-origin:0 0;">Kč</span>
<span style="top:754px;font-size:15px;line-height:17px;color:#1a1a1a;letter-spacing:0.828px;left:149.50px;">11/2021/11</span>
<span style="top:754px;font-size:15px;line-height:17px;color:#1a1a1a;letter-spacing:0.014px;left:421.50px;">3.1.2022</span>
<span style="top:754px;font-size:15px;line-height:17px;color:#1a1a1a;letter-spacing:-0.020px;left:567.30px;">1,0000</span>
<span style="top:754px;font-size:15px;line-height:17px;color:#1a1a1a;letter-spacing:0.181px;left:690.10px;">12 100,00</span>
<span style="top:754px;font-size:15px;line-height:17px;color:#1a1a1a;letter-spacing:0.217px;left:866.10px;">0,00</span>
<span style="top:754px;font-size:15px;line-height:17px;color:#1a1a1a;letter-spacing:0.219px;left:972.10px;">12 100,00</span>
<span style="top:754px;left:1055.40px;font-size:15px;line-height:17px;color:#1a1a1a;transform:scaleX(0.9829);transform-origin:0 0;">Kč</span>
<span style="top:782px;font-size:15px;line-height:17px;color:#1a1a1a;letter-spacing:0.744px;left:149.50px;">11/2021/12</span>
<span style="top:782px;font-size:15px;line-height:17px;color:#1a1a1a;letter-spacing:0.014px;left:421.50px;">3.1.2022</span>
<span style="top:782px;font-size:15px;line-height:17px;color:#1a1a1a;letter-spacing:-0.020px;left:567.30px;">1,0000</span>
<span style="top:782px;font-size:15px;line-height:17px;color:#1a1a1a;letter-spacing:0.181px;left:690.10px;">12 100,00</span>
<span style="top:782px;font-size:15px;line-height:17px;color:#1a1a1a;letter-spacing:0.217px;left:866.10px;">0,00</span>
<span style="top:782px;font-size:15px;line-height:17px;color:#1a1a1a;letter-spacing:0.219px;left:972.10px;">12 100,00</span>
<span style="top:782px;left:1055.40px;font-size:15px;line-height:17px;color:#1a1a1a;transform:scaleX(0.9829);transform-origin:0 0;">Kč</span>
<div style="left:1133px;top:557px;width:20px;height:266px;background:#f0f0f0;"></div>
<svg style="left:1137px;top:562px;" width="12" height="8" viewBox="0 0 12 8"><path d="M1.5 6.5 L6 2 L10.5 6.5" stroke="#505050" stroke-width="1.8" fill="none"/></svg>
<svg style="left:1137px;top:808px;" width="12" height="8" viewBox="0 0 12 8"><path d="M1.5 1.5 L6 6 L10.5 1.5" stroke="#505050" stroke-width="1.8" fill="none"/></svg>
<div style="left:1134px;top:780px;width:18px;height:21px;background:#cdcdcd;"></div>
<div style="left:106px;top:823px;width:1049px;height:32px;background:#f0f0f0;border:1px solid #d0d0d0;"></div>
<svg style="left:114px;top:829.5px;" width="20" height="20" viewBox="0 0 20 20"><g transform="translate(10 10)"><path d="M0 -9.6 V9.6" transform="rotate(0)" stroke="#1f62b0" stroke-width="4.7"/><path d="M0 -9.6 V9.6" transform="rotate(60)" stroke="#1f62b0" stroke-width="4.7"/><path d="M0 -9.6 V9.6" transform="rotate(120)" stroke="#1f62b0" stroke-width="4.7"/><path d="M0 -8.3 V8.3" transform="rotate(0)" stroke="#f0f0f0" stroke-width="2.1"/><path d="M0 -8.3 V8.3" transform="rotate(60)" stroke="#f0f0f0" stroke-width="2.1"/><path d="M0 -8.3 V8.3" transform="rotate(120)" stroke="#f0f0f0" stroke-width="2.1"/></g></svg>
<span style="top:831px;font-size:15px;line-height:17px;color:#1e50a2;left:145.40px;">0</span>
<div style="left:161px;top:826px;width:1px;height:26px;background:#d6d6d6;"></div>
<span style="top:831px;left:170.40px;font-size:15px;line-height:17px;color:#1e50a2;transform:scaleX(0.9463);transform-origin:0 0;">Počet záznamů: 12</span>
<div style="left:301px;top:826px;width:1px;height:26px;background:#d6d6d6;"></div>
<div style="left:1059px;top:826px;width:1px;height:26px;background:#d6d6d6;"></div>
<div style="left:1091px;top:826px;width:1px;height:26px;background:#d6d6d6;"></div>
<svg style="left:1067px;top:830px;" width="17" height="20" viewBox="0 0 17 20"><path d="M14.7 4.3 V1.7 H2 L8.5 9.5 L2 17.2 H14.7 V14.6" stroke="#2b6bb8" stroke-width="1.4" fill="none" stroke-linejoin="miter"/></svg>
<div style="left:1093px;top:825px;width:29px;height:28px;background:#d4d4d4;border:2px solid #6a6a6a;border-right-color:#8a8a8a;border-bottom-color:#8a8a8a;"></div>
<svg style="left:1098px;top:829px;" width="20" height="22" viewBox="0 0 20 22"><path d="M2 16 L3.4 11.5 L12.6 2.3 Q13.6 1.4 14.7 2.4 L15.7 3.4 Q16.6 4.5 15.7 5.5 L6.5 14.7 Z" stroke="#c4c4c4" stroke-width="1.2" fill="none" stroke-linejoin="round"/><path d="M9 20 H19" stroke="#c4c4c4" stroke-width="1.3"/></svg>
<svg style="left:1126px;top:828px;" width="25" height="24" viewBox="0 0 25 24"><g stroke="#1e50a2" fill="none"><path d="M1 1 H19 V6.5" stroke-width="1.3"/><path d="M1 1 V15 H3.5" stroke-width="1.3"/><rect x="3.8" y="4" width="17.5" height="13.5" stroke-width="1.4"/><path d="M3.8 7.8 H21.3 M6.5 10.5 H12 M6.5 13.5 H12 M14 10.5 H18 " stroke-width="1.2"/></g><circle cx="19" cy="18" r="5.3" fill="#f0f0f0" stroke="#1e50a2" stroke-width="1.2"/><path d="M16 18 H22 M19 15 V21" stroke="#1e50a2" stroke-width="1.3"/></svg>
<div style="left:106px;top:864px;width:169px;height:28px;background:#d0d0d0;"></div>
<svg style="left:112px;top:868px;" width="22" height="22" viewBox="0 0 22 22"><path d="M2 1.5 H9 L13 5.5 V18 H2 Z" stroke="#bdbdbd" stroke-width="1.2" fill="#dadada"/><path d="M4 8 H9 M4 11 H9 M4 14 H9" stroke="#bdbdbd" stroke-width="1"/><rect x="10.5" y="9.5" width="8" height="11" fill="#dcdcdc" stroke="#b8b8b8" stroke-width="1.2"/><path d="M12.5 13 H16.5 M12.5 15.5 H16.5 M12.5 18 H16.5" stroke="#b8b8b8" stroke-width="1"/></svg>
<span style="top:870px;font-size:15px;line-height:17px;color:#9a9a9a;letter-spacing:-0.225px;left:136.00px;">Čerpání k objednáv...</span>
<div style="left:282px;top:864px;width:169px;height:28px;background:#d0d0d0;"></div>
<svg style="left:287px;top:868px;" width="24" height="22" viewBox="0 0 24 22"><circle cx="7" cy="6" r="4" stroke="#b8b8b8" stroke-width="1.2" fill="none"/><path d="M1 17 Q2 10.5 7 10.5 Q9 10.5 10 11.5" stroke="#b8b8b8" stroke-width="1.2" fill="none"/><rect x="12.5" y="9.5" width="8" height="11" fill="#dcdcdc" stroke="#b8b8b8" stroke-width="1.2"/><path d="M14.5 13 H18.5 M14.5 15.5 H18.5 M14.5 18 H18.5" stroke="#b8b8b8" stroke-width="1"/></svg>
<span style="top:870px;font-size:15px;line-height:17px;color:#9a9a9a;letter-spacing:-0.137px;left:313.70px;">Čerpání k dodavateli</span>
<div style="left:366px;top:909px;width:261px;height:28px;background:#e1e1e1;border:1px solid #adadad;"></div>
<svg style="left:368px;top:913px;" width="25" height="20" viewBox="0 0 25 20"><path d="M0 1.2 H24.5 M0 7 H24.5 M0 12.7 H24.5 M0 18.4 H24.5" stroke="#2f6fb5" stroke-width="1.4"/></svg>
<span style="top:915px;left:458.60px;font-size:15px;line-height:17px;color:#111;transform:scaleX(0.9530);transform-origin:0 0;">Vedlejší náklady</span>
<div style="left:634px;top:909px;width:262px;height:28px;background:#e1e1e1;border:1px solid #adadad;"></div>
<svg style="left:636px;top:913px;" width="25" height="20" viewBox="0 0 25 20"><path d="M0 1.2 H24.5 M0 7 H24.5 M0 12.7 H24.5 M0 18.4 H24.5" stroke="#2f6fb5" stroke-width="1.4"/></svg>
<span style="top:915px;left:738.50px;font-size:15px;line-height:17px;color:#111;transform:scaleX(0.9384);transform-origin:0 0;">Sériová čísla</span>
<div style="left:903px;top:909px;width:260px;height:28px;background:#e1e1e1;border:1px solid #adadad;"></div>
<svg style="left:905px;top:913px;" width="25" height="20" viewBox="0 0 25 20"><path d="M0 1.2 H24.5 M0 7 H24.5 M0 12.7 H24.5 M0 18.4 H24.5" stroke="#2f6fb5" stroke-width="1.4"/></svg>
<span style="top:915px;font-size:15px;line-height:17px;color:#111;letter-spacing:-0.167px;left:984.00px;">Související doklady</span>
<div style="left:1176px;top:43px;width:9px;height:903px;background:#00adee;"></div>
<svg style="left:1177px;top:478px;" width="8" height="8" viewBox="0 0 8 8"><circle cx="3.5" cy="3.4" r="2.3" fill="#4fd0ff"/></svg>
<svg style="left:1177px;top:489px;" width="8" height="8" viewBox="0 0 8 8"><circle cx="3.5" cy="3.7" r="2.3" fill="#4fd0ff"/></svg>
<svg style="left:1177px;top:500px;" width="8" height="8" viewBox="0 0 8 8"><circle cx="3.5" cy="3.9" r="2.3" fill="#4fd0ff"/></svg>
<div style="left:1189px;top:43px;width:288px;height:903px;background:#0054a6;"></div>
<span style="top:58px;font-size:24.4px;line-height:27px;color:#fff;letter-spacing:0.207px;left:1197.00px;-webkit-text-stroke:0.45px #0054a6;">Faktura 11/2022/1</span>
<svg style="left:1449px;top:59px;" width="18" height="19" viewBox="0 0 18 19"><path d="M6.5 7.7 H1.6 V17.3 H11.4 V12.5" stroke="#fff" stroke-width="1.5" fill="none"/><path d="M6.3 1.7 H16.4 V12 M16 2.1 L6.8 11.4" stroke="#fff" stroke-width="1.5" fill="none"/></svg>
<div style="left:1192px;top:96px;width:260px;height:30px;background:#00adee;"></div>
<span style="top:103px;font-size:16px;line-height:17px;color:#fff;font-weight:bold;letter-spacing:0.196px;left:1197.60px;">Základní údaje</span>
<div style="left:1421px;top:98px;width:1px;height:26px;background:#0a9bd8;"></div>
<svg style="left:1427px;top:106px;" width="20" height="12" viewBox="0 0 20 12"><path d="M1.2 10 L9.7 1.6 L18.2 10" stroke="#fff" stroke-width="1.5" fill="none"/></svg>
<div style="left:1192px;top:126px;width:260px;height:347.5px;background:#fcfcfc;"></div>
<span style="top:135px;font-size:15px;line-height:17px;color:#1e50a2;letter-spacing:-0.295px;left:1201.60px;">Objednávka:</span>
<div style="left:1201px;top:153px;width:243px;height:1px;background:#e3e3e3;"></div>
<span style="top:162px;left:1201.60px;font-size:15px;line-height:17px;color:#1e50a2;transform:scaleX(0.9575);transform-origin:0 0;">Dodavatel:</span>
<span style="top:162px;left:1276.30px;font-size:15px;line-height:17px;color:#111;transform:scaleX(0.9472);transform-origin:0 0;">Severomoravská energe...</span>
<div style="left:1201px;top:181px;width:243px;height:1px;background:#e3e3e3;"></div>
<span style="top:190px;left:1201.60px;font-size:15px;line-height:17px;color:#1e50a2;transform:scaleX(0.9269);transform-origin:0 0;">Popis:</span>
<div style="left:1201px;top:208px;width:243px;height:1px;background:#e3e3e3;"></div>
<span style="top:217px;font-size:15px;line-height:17px;color:#1e50a2;letter-spacing:0.080px;left:1201.60px;">Netto:</span>
<span style="top:217px;left:1426.50px;font-size:15px;line-height:17px;color:#1e50a2;transform:scaleX(0.8971);transform-origin:0 0;">Kč</span>
<span style="top:217px;left:1370.00px;font-size:15px;line-height:17px;color:#111;transform:scaleX(0.8838);transform-origin:0 0;">5 800,00</span>
<div style="left:1201px;top:235px;width:243px;height:1px;background:#e3e3e3;"></div>
<span style="top:245px;left:1201.60px;font-size:15px;line-height:17px;color:#1e50a2;transform:scaleX(0.9203);transform-origin:0 0;">DPH:</span>
<span style="top:245px;left:1426.50px;font-size:15px;line-height:17px;color:#1e50a2;transform:scaleX(0.8971);transform-origin:0 0;">Kč</span>
<span style="top:245px;left:1370.00px;font-size:15px;line-height:17px;color:#111;transform:scaleX(0.8838);transform-origin:0 0;">1 218,00</span>
<div style="left:1201px;top:263px;width:243px;height:1px;background:#e3e3e3;"></div>
<span style="top:272px;font-size:15px;line-height:17px;color:#1e50a2;font-weight:bold;letter-spacing:-0.017px;left:1201.60px;">Brutto:</span>
<span style="top:272px;left:1425.70px;font-size:15px;line-height:17px;color:#1e50a2;transform:scaleX(0.8571);transform-origin:0 0;font-weight:bold;">Kč</span>
<span style="top:272px;font-size:15px;line-height:17px;color:#111;font-weight:bold;left:1361.50px;">7 018,00</span>
<div style="left:1201px;top:290px;width:243px;height:1px;background:#e3e3e3;"></div>
<span style="top:300px;font-size:15px;line-height:17px;color:#1e50a2;letter-spacing:0.007px;left:1201.60px;">Datum účetního případu:</span>
<span style="top:300px;left:1391.30px;font-size:15px;line-height:17px;color:#111;transform:scaleX(0.8838);transform-origin:0 0;">3.1.2022</span>
<div style="left:1201px;top:318px;width:243px;height:1px;background:#e3e3e3;"></div>
<span style="top:327px;left:1201.60px;font-size:15px;line-height:17px;color:#1e50a2;transform:scaleX(0.9539);transform-origin:0 0;">Datum UZP:</span>
<span style="top:327px;left:1391.30px;font-size:15px;line-height:17px;color:#111;transform:scaleX(0.8838);transform-origin:0 0;">3.1.2022</span>
<div style="left:1201px;top:345px;width:243px;height:1px;background:#e3e3e3;"></div>
<span style="top:355px;font-size:15px;line-height:17px;color:#1e50a2;letter-spacing:-0.050px;left:1201.60px;">Datum splatnosti:</span>
<span style="top:355px;left:1383.70px;font-size:15px;line-height:17px;color:#111;transform:scaleX(0.8884);transform-origin:0 0;">17.1.2022</span>
<div style="left:1201px;top:373px;width:243px;height:1px;background:#e3e3e3;"></div>
<span style="top:382px;font-size:15px;line-height:17px;color:#1e50a2;letter-spacing:-0.277px;left:1201.60px;">Datum zaplacení:</span>
<span style="top:382px;left:1391.10px;font-size:15px;line-height:17px;color:#111;transform:scaleX(0.8872);transform-origin:0 0;">0.0.0000</span>
<div style="left:1201px;top:400px;width:243px;height:1px;background:#e3e3e3;"></div>
<span style="top:410px;font-size:15px;line-height:17px;color:#1e50a2;letter-spacing:-0.211px;left:1201.60px;">Zbývá zaplatit:</span>
<span style="top:410px;left:1426.50px;font-size:15px;line-height:17px;color:#1e50a2;transform:scaleX(0.8971);transform-origin:0 0;">Kč</span>
<span style="top:410px;left:1369.70px;font-size:15px;line-height:17px;color:#111;transform:scaleX(0.8889);transform-origin:0 0;">7 018,00</span>
<div style="left:1201px;top:428px;width:243px;height:1px;background:#e3e3e3;"></div>
<div style="left:1382px;top:436px;width:29px;height:29px;background:#c4c4c4;border:1px solid #a9a9a9;"></div>
<div style="left:1453px;top:96px;width:20px;height:748px;background:#f0f0f0;"></div>
<svg style="left:1457px;top:102px;" width="12" height="9" viewBox="0 0 12 9"><path d="M1.4 7.4 L5.7 3 L10 7.4" stroke="#505050" stroke-width="2.2" fill="none"/></svg>
<svg style="left:1457px;top:829px;" width="12" height="9" viewBox="0 0 12 9"><path d="M1.4 1.6 L5.7 6 L10 1.6" stroke="#505050" stroke-width="2.2" fill="none"/></svg>
<div style="left:1454px;top:117px;width:18px;height:696px;background:#c8c8c8;"></div>
<div style="left:1192px;top:482px;width:260px;height:30px;background:#00adee;"></div>
<span style="top:490px;font-size:16px;line-height:17px;color:#fff;font-weight:bold;letter-spacing:0.061px;left:1197.60px;">Zálohy k objednávce</span>
<div style="left:1421px;top:484px;width:1px;height:26px;background:#0a9bd8;"></div>
<svg style="left:1427px;top:492px;" width="20" height="12" viewBox="0 0 20 12"><path d="M1.2 10 L9.7 1.6 L18.2 10" stroke="#fff" stroke-width="1.5" fill="none"/></svg>
<div style="left:1192px;top:512px;width:260px;height:100.29999999999995px;background:#fcfcfc;"></div>
<span style="top:521px;left:1201.60px;font-size:15px;line-height:17px;color:#1e50a2;transform:scaleX(0.9617);transform-origin:0 0;">Čerpáno</span>
<span style="top:521px;left:1426.50px;font-size:15px;line-height:17px;color:#1e50a2;transform:scaleX(0.8971);transform-origin:0 0;">Kč</span>
<span style="top:521px;left:1396.10px;font-size:15px;line-height:17px;color:#111;transform:scaleX(0.8752);transform-origin:0 0;">0,00</span>
<div style="left:1201px;top:539px;width:243px;height:1px;background:#e3e3e3;"></div>
<span style="top:548px;font-size:15px;line-height:17px;color:#1e50a2;font-weight:bold;letter-spacing:-0.100px;left:1201.60px;">Dočerpat</span>
<span style="top:548px;left:1425.70px;font-size:15px;line-height:17px;color:#1e50a2;transform:scaleX(0.8571);transform-origin:0 0;font-weight:bold;">Kč</span>
<span style="top:548px;font-size:15px;line-height:17px;color:#111;font-weight:bold;letter-spacing:-0.183px;left:1391.30px;">0,00</span>
<div style="left:1201px;top:566px;width:243px;height:1px;background:#e3e3e3;"></div>
<div style="left:1192px;top:620px;width:260px;height:31px;background:#00adee;"></div>
<span style="top:628px;font-size:16px;line-height:17px;color:#fff;font-weight:bold;letter-spacing:0.206px;left:1197.60px;">Zálohy k dodavateli</span>
<div style="left:1421px;top:622px;width:1px;height:27px;background:#0a9bd8;"></div>
<svg style="left:1427px;top:630px;" width="20" height="12" viewBox="0 0 20 12"><path d="M1.2 10 L9.7 1.6 L18.2 10" stroke="#fff" stroke-width="1.5" fill="none"/></svg>
<div style="left:1192px;top:651px;width:260px;height:99.5px;background:#fcfcfc;"></div>
<span style="top:660px;left:1201.60px;font-size:15px;line-height:17px;color:#1e50a2;transform:scaleX(0.9617);transform-origin:0 0;">Čerpáno</span>
<span style="top:660px;left:1426.50px;font-size:15px;line-height:17px;color:#1e50a2;transform:scaleX(0.8971);transform-origin:0 0;">Kč</span>
<span style="top:660px;left:1355.40px;font-size:15px;line-height:17px;color:#111;transform:scaleX(0.8840);transform-origin:0 0;">145 200,00</span>
<div style="left:1201px;top:678px;width:243px;height:1px;background:#e3e3e3;"></div>
<span style="top:687px;font-size:15px;line-height:17px;color:#1e50a2;font-weight:bold;letter-spacing:-0.100px;left:1201.60px;">Dočerpat</span>
<span style="top:687px;left:1425.70px;font-size:15px;line-height:17px;color:#1e50a2;transform:scaleX(0.8571);transform-origin:0 0;font-weight:bold;">Kč</span>
<span style="top:687px;font-size:15px;line-height:17px;color:#111;font-weight:bold;letter-spacing:0.075px;left:1353.40px;">11 979,00</span>
<div style="left:1201px;top:705px;width:243px;height:1px;background:#e3e3e3;"></div>
<svg style="left:1204px;top:715px;" width="25" height="27" viewBox="0 0 25 27"><path d="M1.3 1.3 H20.7 V14 M1.3 1.3 V21.7 H10" stroke="#1c1c1c" stroke-width="1.7" fill="#fff"/><path d="M5 6.3 H14 M16 6.3 H17.6 M5 10.3 H14 M16 10.3 H17.6 M5 14.3 H10" stroke="#1c1c1c" stroke-width="1.6"/><ellipse cx="17.5" cy="22.5" rx="6.8" ry="3.2" fill="#f0a92a"/><ellipse cx="17.5" cy="20.3" rx="6.8" ry="3.2" fill="#f6b630"/><ellipse cx="17.5" cy="18" rx="6.8" ry="3.2" fill="#fbd04f"/><ellipse cx="17.5" cy="17.6" rx="5" ry="2" fill="#fde07a"/></svg>
<div style="left:1192px;top:759px;width:260px;height:31px;background:#00adee;"></div>
<span style="top:767px;font-size:16px;line-height:17px;color:#fff;font-weight:bold;letter-spacing:0.213px;left:1197.60px;">Ostatní údaje</span>
<div style="left:1421px;top:761px;width:1px;height:27px;background:#0a9bd8;"></div>
<svg style="left:1427px;top:769px;" width="20" height="12" viewBox="0 0 20 12"><path d="M1.2 10 L9.7 1.6 L18.2 10" stroke="#fff" stroke-width="1.5" fill="none"/></svg>
<div style="left:1192px;top:790px;width:260px;height:53.5px;background:#fcfcfc;"></div>
<span style="top:798px;font-size:15px;line-height:17px;color:#1e50a2;letter-spacing:-0.006px;left:1201.60px;">Vytvořil:</span>
<span style="top:798px;left:1298.80px;font-size:15px;line-height:17px;color:#111;transform:scaleX(0.8438);transform-origin:0 0;">K2</span>
<span style="top:798px;left:1319.40px;font-size:15px;line-height:17px;color:#1e50a2;transform:scaleX(0.8982);transform-origin:0 0;">02.11.2021 14:27:43</span>
<div style="left:1201px;top:816px;width:243px;height:1px;background:#e3e3e3;"></div>
<span style="top:825px;font-size:15px;line-height:17px;color:#1e50a2;letter-spacing:-0.092px;left:1201.60px;">Změnil:</span>
<span style="top:825px;left:1298.80px;font-size:15px;line-height:17px;color:#111;transform:scaleX(0.8438);transform-origin:0 0;">K2</span>
<span style="top:825px;left:1319.40px;font-size:15px;line-height:17px;color:#1e50a2;transform:scaleX(0.8982);transform-origin:0 0;">02.11.2021 14:30:24</span>
<div style="left:1192px;top:843px;width:282px;height:5px;background:#0054a6;"></div>
<div style="left:1192px;top:848px;width:282px;height:30px;background:#00adee;"></div>
<span style="top:856px;font-size:16px;line-height:17px;color:#fff;font-weight:bold;letter-spacing:-0.044px;left:1197.60px;">Nastavení</span>
<div style="left:1443px;top:850px;width:1px;height:26px;background:#0a9bd8;"></div>
<svg style="left:1449px;top:858px;" width="20" height="12" viewBox="0 0 20 12"><path d="M1.2 10 L9.7 1.6 L18.2 10" stroke="#fff" stroke-width="1.5" fill="none"/></svg>
<div style="left:1192px;top:878px;width:282px;height:64px;background:#fcfcfc;"></div>
<span style="top:887px;font-size:15px;line-height:17px;color:#1e50a2;letter-spacing:-0.010px;left:1210.30px;">Období</span>
<span style="top:887px;left:1346.30px;font-size:15px;line-height:17px;color:#1e50a2;transform:scaleX(0.9093);transform-origin:0 0;">Sklad</span>
<div style="left:1200px;top:905px;width:130px;height:29px;background:#ffffe1;border:2px solid #00adee;"></div>
<span style="top:912px;font-size:15px;line-height:17px;color:#111;letter-spacing:0.500px;left:1204.00px;">2022</span>
<svg style="left:1308px;top:913px;" width="15" height="13" viewBox="0 0 15 13"><path d="M0.2 1 H3.8 V4.6 H0.2 Z M5.6 1 H9.2 V4.6 H5.6 Z M11 1 H14.6 V4.6 H11 Z" fill="#2a67b3"/><path d="M0.6 6.5 L7.4 12.3 L14.2 6.5" stroke="#3f7dc0" stroke-width="1.4" fill="none"/></svg>
<div style="left:1337px;top:905px;width:128px;height:29px;background:#ffffe1;border:1px solid #3ab4f0;"></div>
<svg style="left:1443px;top:913px;" width="15" height="13" viewBox="0 0 15 13"><path d="M0.2 1 H3.8 V4.6 H0.2 Z M5.6 1 H9.2 V4.6 H5.6 Z M11 1 H14.6 V4.6 H11 Z" fill="#2a67b3"/><path d="M0.6 6.5 L7.4 12.3 L14.2 6.5" stroke="#3f7dc0" stroke-width="1.4" fill="none"/></svg>
</div></body></html>
